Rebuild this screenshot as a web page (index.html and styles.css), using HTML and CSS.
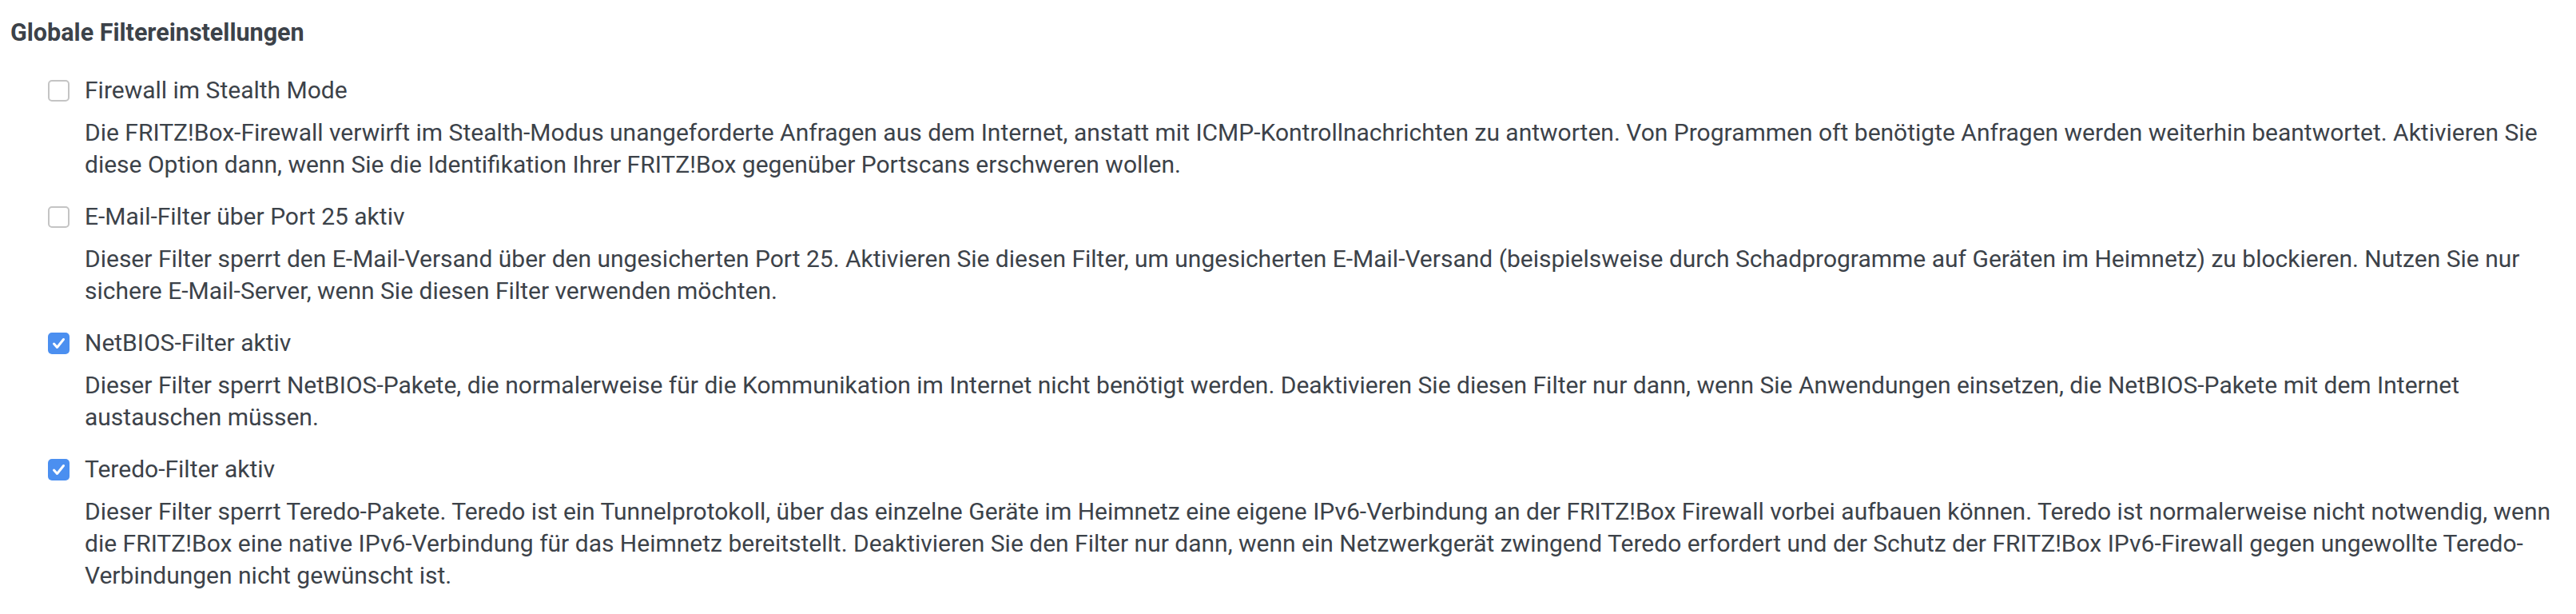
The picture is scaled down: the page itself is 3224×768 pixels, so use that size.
FILE: index.html
```html
<!DOCTYPE html>
<html lang="de">
<head>
    <meta charset="UTF-8">
    <meta name="viewport" content="width=device-width, initial-scale=1.0">
    <title>Filter</title>
    <link rel="stylesheet" href="styles.css">
</head>
<body>
    <div class="page">
        <h2 class="section-title">Globale Filtereinstellungen</h2>

        <div class="filter-list">
            <div class="option">
                <span class="checkbox"></span>
                <div class="option-label">Firewall im Stealth Mode</div>
                <p class="option-desc">Die FRITZ!Box-Firewall verwirft im Stealth-Modus unangeforderte Anfragen aus dem Internet, anstatt mit ICMP-Kontrollnachrichten zu antworten. Von Programmen oft benötigte Anfragen werden weiterhin beantwortet. Aktivieren Sie diese Option dann, wenn Sie die Identifikation Ihrer FRITZ!Box gegenüber Portscans erschweren wollen.</p>
            </div>

            <div class="option">
                <span class="checkbox"></span>
                <div class="option-label">E-Mail-Filter über Port 25 aktiv</div>
                <p class="option-desc">Dieser Filter sperrt den E-Mail-Versand über den ungesicherten Port 25. Aktivieren Sie diesen Filter, um ungesicherten E-Mail-Versand (beispielsweise durch Schadprogramme auf Geräten im Heimnetz) zu blockieren. Nutzen Sie nur sichere E-Mail-Server, wenn Sie diesen Filter verwenden möchten.</p>
            </div>

            <div class="option">
                <span class="checkbox checked">
                    <svg viewBox="0 0 27 27" width="27" height="27"><polyline points="7.5,14 11.5,18.5 19.5,8.5" /></svg>
                </span>
                <div class="option-label">NetBIOS-Filter aktiv</div>
                <p class="option-desc">Dieser Filter sperrt NetBIOS-Pakete, die normalerweise für die Kommunikation im Internet nicht benötigt werden. Deaktivieren Sie diesen Filter nur dann, wenn Sie Anwendungen einsetzen, die NetBIOS-Pakete mit dem Internet austauschen müssen.</p>
            </div>

            <div class="option">
                <span class="checkbox checked">
                    <svg viewBox="0 0 27 27" width="27" height="27"><polyline points="7.5,14 11.5,18.5 19.5,8.5" /></svg>
                </span>
                <div class="option-label">Teredo-Filter aktiv</div>
                <p class="option-desc">Dieser Filter sperrt Teredo-Pakete. Teredo ist ein Tunnelprotokoll, über das einzelne Geräte im Heimnetz eine eigene IPv6-Verbindung an der FRITZ!Box Firewall vorbei aufbauen können. Teredo ist normalerweise nicht notwendig, wenn die FRITZ!Box eine native IPv6-Verbindung für das Heimnetz bereitstellt. Deaktivieren Sie den Filter nur dann, wenn ein Netzwerkgerät zwingend Teredo erfordert und der Schutz der FRITZ!Box IPv6-Firewall gegen ungewollte Teredo-Verbindungen nicht gewünscht ist.</p>
            </div>
        </div>
    </div>
</body>
</html>
```
FILE: styles.css
```css
body {
    font-family: Roboto, "Liberation Sans", sans-serif;
    margin: 0;
    background-color: #ffffff;
    color: #3c4249;
}
.page {
    padding: 21px 8px 0 13px;
}
.section-title {
    font-size: 30.5px;
    font-weight: 700;
    line-height: 40px;
    margin: 0 0 32px 0;
}
.filter-list {
    padding-left: 47px;
}
.option {
    display: grid;
    grid-template-columns: 27px 1fr;
    column-gap: 19px;
    align-items: center;
    margin-bottom: 25px;
    font-size: 30px;
    line-height: 40px;
}
.checkbox {
    grid-row: 1;
    grid-column: 1;
    width: 27px;
    height: 27px;
    box-sizing: border-box;
    border: 2px solid #c4c4c4;
    border-radius: 5px;
    background-color: #fff;
}
.checkbox.checked {
    border: none;
    background-color: #4b8ff0;
}
.checkbox svg {
    display: block;
}
.checkbox polyline {
    fill: none;
    stroke: #fff;
    stroke-width: 3;
    stroke-linecap: round;
    stroke-linejoin: round;
}
.option-label {
    grid-row: 1;
    grid-column: 2;
}
.option-desc {
    grid-row: 2;
    grid-column: 2;
    margin: 13px 0 0 0;
}
```
